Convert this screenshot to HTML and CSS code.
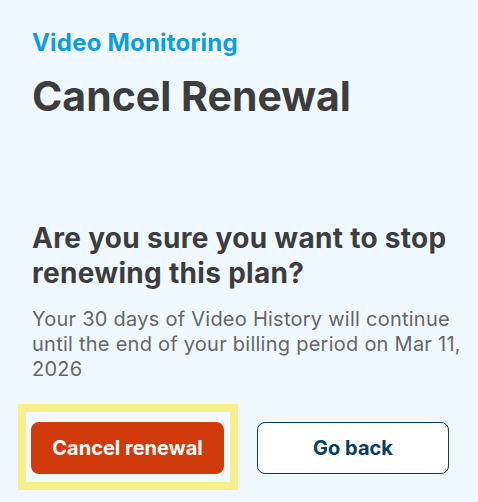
FILE: index.html
```html
<!DOCTYPE html>
<html lang="en">
<head>
<meta charset="utf-8">
<title>Cancel Renewal</title>
<link rel="stylesheet" href="styles.css">
</head>
<body>
<main class="page">
  <header class="header">
    <p class="eyebrow">Video Monitoring</p>
    <h1 class="title">Cancel Renewal</h1>
  </header>
  <section class="confirm">
    <h2 class="question">Are you sure you want to stop renewing this plan?</h2>
    <p class="details">Your 30 days of Video History will continue until the end of your billing period on Mar 11, 2026</p>
    <div class="actions">
      <div class="focus-ring">
        <button class="btn btn-danger" type="button">Cancel renewal</button>
      </div>
      <button class="btn btn-outline" type="button">Go back</button>
    </div>
  </section>
</main>
</body>
</html>
```

FILE: styles.css
```css
* { box-sizing: border-box; }
html, body {
  margin: 0;
  padding: 0;
  background: #f0f9ff;
}
body {
  font-family: Inter, "Noto Sans", "Liberation Sans", sans-serif;
  width: 478px;
  height: 502px;
  overflow: hidden;
}
.page {
  padding: 29px 14px 0 32px;
  display: flex;
  flex-direction: column;
}
.header {
  display: flex;
  flex-direction: column;
  gap: 15px;
}
.eyebrow {
  margin: 0;
  font-size: 24px;
  line-height: 28px;
  font-weight: 700;
  color: #0a9ddf;
  letter-spacing: 0.2px;
}
.title {
  margin: 0;
  font-size: 41px;
  line-height: 48px;
  font-weight: 700;
  color: #3d3d3d;
}
.confirm {
  margin-top: 101px;
  display: flex;
  flex-direction: column;
}
.question {
  margin: 0;
  padding-right: 12px;
  font-size: 28px;
  line-height: 35px;
  font-weight: 700;
  color: #3d3d3d;
  letter-spacing: 0.3px;
}
.details {
  margin: 16px 0 0;
  font-size: 20px;
  line-height: 25px;
  font-weight: 400;
  color: #666666;
  letter-spacing: 0.25px;
}
.actions {
  margin-top: 22px;
  margin-left: -14px;
  display: flex;
  align-items: flex-start;
}
.focus-ring {
  border: 8px solid #f7ef8a;
  padding: 10px 6px 8px 5px;
}
.btn {
  width: 193px;
  height: 52px;
  border-radius: 8px;
  font-family: inherit;
  font-size: 20px;
  font-weight: 700;
  cursor: pointer;
  padding: 0;
}
.btn-danger {
  display: block;
  background: #d13b0b;
  color: #ffffff;
  border: none;
}
.btn-outline {
  margin-top: 18px;
  margin-left: 19px;
  width: 192px;
  background: #ffffff;
  color: #0b3b5a;
  border: 1px solid #0b3b5a;
}
```
